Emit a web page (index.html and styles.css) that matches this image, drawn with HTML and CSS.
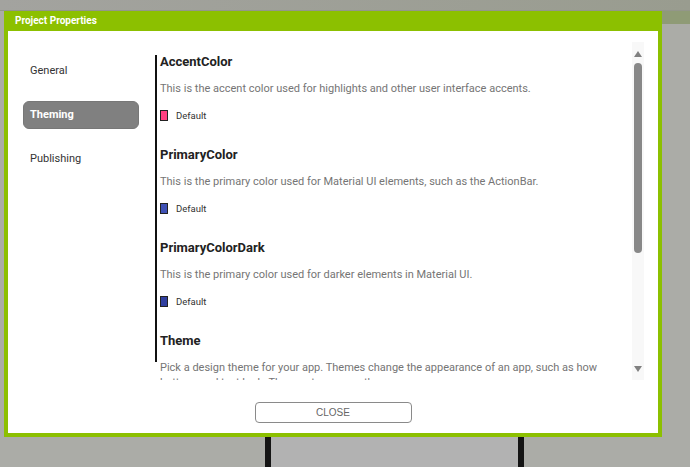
FILE: index.html
```html
<!DOCTYPE html>
<html lang="en">
<head>
    <meta charset="UTF-8">
    <title>Project Properties</title>
    <link rel="stylesheet" href="styles.css">
</head>
<body>

<div class="topbar"></div>
<div class="stage"></div>

<div class="dialog">
    <div class="dialog-title">Project Properties</div>
    <div class="dialog-body">
        <div class="main">
            <ul class="nav">
                <li>General</li>
                <li class="active">Theming</li>
                <li>Publishing</li>
            </ul>

            <div class="props">
                <div class="props-list">
                    <div class="prop">
                        <h3>AccentColor</h3>
                        <p>This is the accent color used for highlights and other user interface accents.</p>
                        <div class="swatch-row"><span class="swatch accent"></span>Default</div>
                    </div>
                    <div class="prop">
                        <h3>PrimaryColor</h3>
                        <p>This is the primary color used for Material UI elements, such as the ActionBar.</p>
                        <div class="swatch-row"><span class="swatch primary"></span>Default</div>
                    </div>
                    <div class="prop">
                        <h3>PrimaryColorDark</h3>
                        <p>This is the primary color used for darker elements in Material UI.</p>
                        <div class="swatch-row"><span class="swatch primary-dark"></span>Default</div>
                    </div>
                    <div class="prop">
                        <h3>Theme</h3>
                        <p>Pick a design theme for your app. Themes change the appearance of an app, such as how buttons and text look. The most common themes are:</p>
                    </div>
                </div>
                <div class="scrollbar">
                    <span class="arrow up"></span>
                    <span class="thumb"></span>
                    <span class="arrow down"></span>
                </div>
            </div>
        </div>

        <div class="footer">
            <button class="close-btn">CLOSE</button>
        </div>
    </div>
</div>

</body>
</html>
```

FILE: styles.css
```css
* {
    margin: 0;
    padding: 0;
    box-sizing: border-box;
}

body {
    width: 690px;
    height: 467px;
    overflow: hidden;
    background: linear-gradient(#8f9b76, #8f9b76) no-repeat right 0 top 11px / 28px 13px, #abaca7;
    font-family: Roboto, "Liberation Sans", sans-serif;
    position: relative;
}

/* page behind the dialog */
.topbar {
    height: 11px;
    background: linear-gradient(to right, #a3a39f 0, #999c8f 100%);
    border-bottom: 1px solid #93968a;
}

.stage {
    margin: 426px 0 0 265px;
    width: 259px;
    height: 30px;
    background-color: #b2b2b2;
    border-left: 6px solid #141414;
    border-right: 6px solid #141414;
}

/* dialog */
.dialog {
    position: absolute;
    left: 4px;
    top: 11px;
    width: 658px;
    height: 426px;
    border: 4px solid #8cc000;
    border-top: none;
    background-color: #8cc000;
    display: flex;
    flex-direction: column;
}

.dialog-title {
    height: 20px;
    padding: 4px 0 0 7px;
    color: #fff;
    font-size: 10px;
    font-weight: bold;
    line-height: 12px;
}

.dialog-body {
    flex: 1;
    background-color: #fff;
    display: flex;
    flex-direction: column;
}

.main {
    flex: 1;
    display: flex;
}

.nav {
    list-style: none;
    width: 147px;
    padding: 26px 0 0 15px;
}

.nav li {
    width: 116px;
    height: 28px;
    line-height: 28px;
    margin-bottom: 16px;
    padding-left: 7px;
    font-size: 11px;
    color: #333;
    border-radius: 6px;
}

.nav li.active {
    background-color: #808080;
    color: #fff;
    font-weight: bold;
    border: 1px solid #777;
    line-height: 26px;
    padding-left: 6px;
}

.props {
    margin-top: 11px;
    width: 490px;
    height: 338px;
    display: flex;
    overflow: hidden;
    background: linear-gradient(#111, #111) no-repeat 0 13px / 2px 307px;
}

.props-list {
    flex: 1;
    padding: 12px 0 0 5px;
}

.prop {
    margin-bottom: 26px;
}

.prop h3 {
    font-size: 13px;
    line-height: 16px;
    color: #222;
}

.prop p {
    margin-top: 11px;
    font-size: 11px;
    line-height: 15px;
    color: #757575;
    padding-right: 10px;
}

.swatch-row {
    margin-top: 13px;
    height: 12px;
    display: flex;
    align-items: center;
    font-size: 9.5px;
    color: #333;
}

.swatch {
    width: 8px;
    height: 11px;
    margin-right: 8px;
    border: 1px solid #222;
}

.swatch.accent { background-color: #ff4081; }
.swatch.primary { background-color: #3f51b5; }
.swatch.primary-dark { background-color: #303f9f; }

.scrollbar {
    width: 12px;
    margin-right: 1px;
    background-color: #f8f8f8;
    display: flex;
    flex-direction: column;
    align-items: center;
}

.arrow {
    width: 0;
    height: 0;
    border-left: 4px solid transparent;
    border-right: 4px solid transparent;
}

.arrow.up {
    margin-top: 9px;
    border-bottom: 6px solid #808080;
}

.arrow.down {
    margin-top: 113px;
    border-top: 6px solid #808080;
}

.thumb {
    margin-top: 6px;
    width: 8px;
    height: 190px;
    border-radius: 4px;
    background-color: #888;
}

.footer {
    height: 53px;
    display: flex;
    justify-content: center;
    padding-top: 22px;
}

.close-btn {
    width: 157px;
    height: 21px;
    border: 1px solid #8a8a8a;
    border-radius: 4px;
    background-color: #fff;
    color: #666;
    font-family: "Liberation Sans", Arial, sans-serif;
    font-size: 10px;
}
```
